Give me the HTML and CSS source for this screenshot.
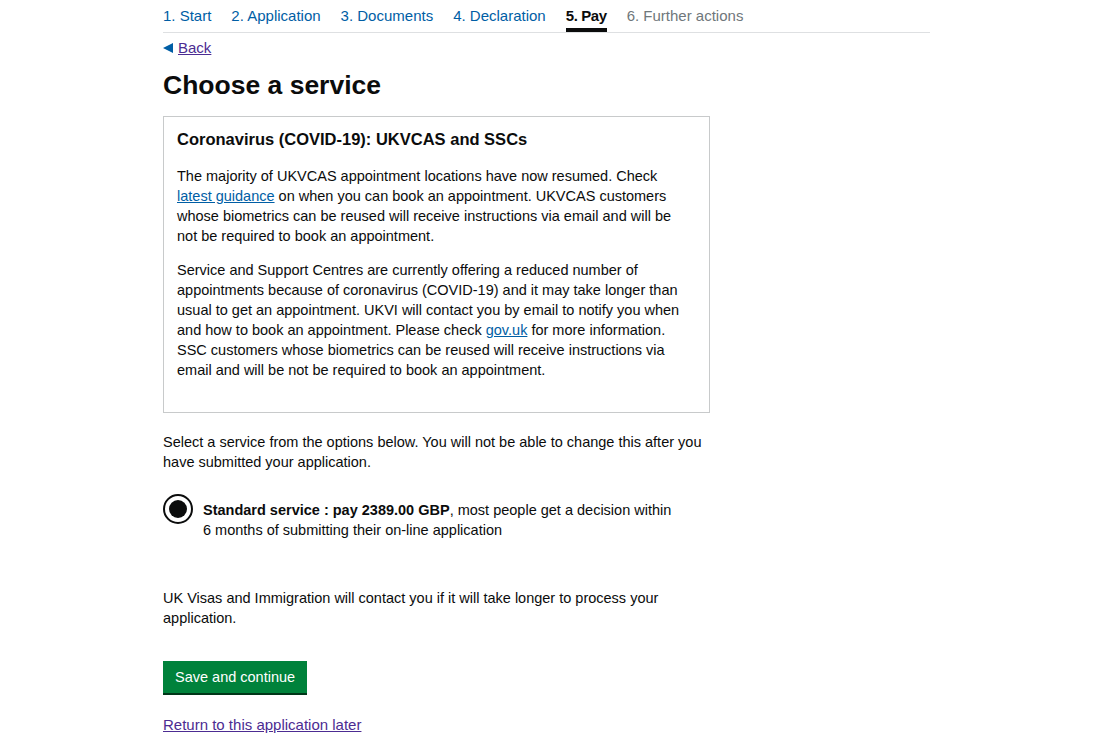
FILE: index.html
```html
<!DOCTYPE html>
<html lang="en">
<head>
    <meta charset="UTF-8">
    <meta name="viewport" content="width=device-width, initial-scale=1.0">
    <title>Choose a service</title>
    <link rel="stylesheet" href="styles.css">
</head>
<body>
    <div class="page">
        <nav class="steps">
            <a class="step" href="#">1. Start</a>
            <a class="step" href="#">2. Application</a>
            <a class="step" href="#">3. Documents</a>
            <a class="step" href="#">4. Declaration</a>
            <span class="step current">5. Pay</span>
            <span class="step disabled">6. Further actions</span>
        </nav>

        <a class="back-link" href="#"><span class="back-arrow"></span>Back</a>

        <main>
            <h1>Choose a service</h1>

            <div class="notice">
                <h2>Coronavirus (COVID-19): UKVCAS and SSCs</h2>
                <p>The majority of UKVCAS appointment locations have now resumed. Check <a href="#">latest guidance</a> on when you can book an appointment. UKVCAS customers whose biometrics can be reused will receive instructions via email and will be not be required to book an appointment.</p>
                <p>Service and Support Centres are currently offering a reduced number of appointments because of coronavirus (COVID-19) and it may take longer than usual to get an appointment. UKVI will contact you by email to notify you when and how to book an appointment. Please check <a href="#">gov.uk</a> for more information. SSC customers whose biometrics can be reused will receive instructions via email and will be not be required to book an appointment.</p>
            </div>

            <form>
                <p class="lead">Select a service from the options below. You will not be able to change this after you have submitted your application.</p>

                <label class="radio">
                    <input type="radio" name="service" checked>
                    <span class="radio-mark"></span>
                    <span class="radio-text"><strong>Standard service : pay 2389.00 GBP</strong>, most people get a decision within 6 months of submitting their on-line application</span>
                </label>

                <p class="note">UK Visas and Immigration will contact you if it will take longer to process your application.</p>

                <button type="submit" class="button">Save and continue</button>
            </form>

            <a class="later-link" href="#">Return to this application later</a>
        </main>
    </div>
</body>
</html>
```

FILE: styles.css
```css
body {
    font-family: "Liberation Sans", Arial, sans-serif;
    margin: 0;
    padding: 0;
    background: #fff;
    color: #0b0c0c;
    font-size: 14.5px;
    line-height: 20px;
}
a {
    color: #005ea5;
}
.page {
    width: 767px;
    margin: 0 auto;
}
.steps {
    display: flex;
    gap: 20px;
    padding-top: 6px;
    font-size: 15px;
    border-bottom: 1px solid #dee0e2;
}
.step {
    display: block;
    padding-bottom: 6px;
    color: #005ea5;
    text-decoration: none;
}
.step.current {
    font-weight: bold;
    color: #0b0c0c;
    letter-spacing: -0.4px;
    padding-bottom: 2px;
    border-bottom: 4px solid #0b0c0c;
}
.step.disabled {
    color: #6f777b;
}
.back-link {
    display: inline-flex;
    align-items: center;
    margin-top: 5px;
    font-size: 15px;
    color: #4c2c92;
}
.back-arrow {
    width: 0;
    height: 0;
    margin-right: 5px;
    border-top: 5px solid transparent;
    border-bottom: 5px solid transparent;
    border-right: 10px solid #005ea5;
}
h1 {
    margin: 11px 0 0;
    font-size: 26.5px;
    line-height: 32px;
}
.notice {
    width: 519px;
    margin-top: 15px;
    padding: 11px 13px 18px;
    border: 1px solid #c8cacb;
}
.notice h2 {
    margin: 0 0 16px;
    font-size: 16.5px;
    line-height: 22px;
}
.notice p {
    max-width: 510px;
    margin: 0 0 14px;
}
form {
    margin-top: 19px;
}
.lead {
    width: 550px;
    margin: 0;
}
.radio {
    display: flex;
    align-items: flex-start;
    margin-top: 22px;
    position: relative;
}
.radio input {
    position: absolute;
    opacity: 0;
}
.radio-mark {
    flex: none;
    width: 26px;
    height: 26px;
    border: 2px solid #0b0c0c;
    border-radius: 50%;
    position: relative;
}
.radio-mark::after {
    content: "";
    position: absolute;
    left: 4px;
    top: 4px;
    width: 18px;
    height: 18px;
    border-radius: 50%;
    background: #0b0c0c;
}
.radio-text {
    width: 480px;
    margin-left: 10px;
    margin-top: 6px;
}
.note {
    width: 520px;
    margin: 48px 0 0;
}
.button {
    display: block;
    margin-top: 33px;
    padding: 7px 12px 6px;
    font-family: inherit;
    font-size: 14.5px;
    line-height: 19px;
    color: #fff;
    background: #00823b;
    border: none;
    border-radius: 0;
    box-shadow: 0 2px 0 #003618;
    cursor: pointer;
}
.later-link {
    display: inline-block;
    margin-top: 22px;
    font-size: 15px;
    color: #4c2c92;
}
```
